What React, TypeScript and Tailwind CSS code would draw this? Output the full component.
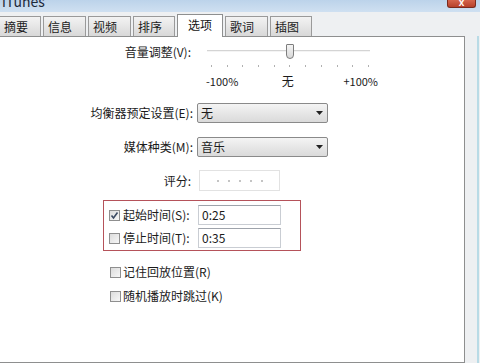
import React from "react";

const font = { fontFamily: '"Noto Sans CJK SC", "Liberation Sans", sans-serif' };

const tabs = ["摘要", "信息", "视频", "排序", "选项", "歌词", "插图"];
const tabWidths = [42, 43, 43, 42, 46, 43, 42];

function Checkbox({ checked }: { checked?: boolean }) {
  return (
    <span className="relative inline-block w-[11px] h-[11px] border border-[#8f8f8f] bg-gradient-to-br from-[#dcdcdc] to-[#f7f7f7] shrink-0">
      {checked && (
        <svg viewBox="0 0 11 11" className="absolute -left-px -top-px w-[11px] h-[11px]">
          <path d="M2.5 5.5 L4.5 8 L8.5 2.5" fill="none" stroke="#3b4a63" strokeWidth="1.6" />
        </svg>
      )}
    </span>
  );
}

function Select({ value }: { value: string }) {
  return (
    <div className="w-[131px] h-[20px] border border-[#8a8a8a] rounded-[2px] bg-gradient-to-b from-[#f4f4f4] to-[#dadada] flex items-center pl-[3px] pr-[4px]">
      <span className="flex-1 text-[12px] leading-[14px] text-[#1b1b1b]">{value}</span>
      <svg viewBox="0 0 7 4" className="w-[7px] h-[4px]">
        <path d="M0 0 H7 L3.5 4 Z" fill="#222" />
      </svg>
    </div>
  );
}

function TimeInput({ value }: { value: string }) {
  return (
    <div className="w-[83px] h-[20px] border border-[#c9cdd3] border-t-[#9ea3ab] bg-white flex items-center pl-[3px] text-[12px] leading-[14px] text-[#1b1b1b]">
      {value}
    </div>
  );
}

export default function App() {
  return (
    <div style={font} className="w-[480px] h-[363px] overflow-hidden bg-[#eef0f2] flex flex-col relative">
      {/* title bar */}
      <div className="h-[12px] bg-gradient-to-b from-[#bcd3ea] to-[#cfe0f1] relative shrink-0">
        <span className="absolute left-[2px] top-[-7px] text-[14px] leading-[16px] text-[#1d2a3a]">iTunes</span>
        <div className="absolute left-[447px] top-0 w-[29px] h-[8px] rounded-b-[3px] bg-gradient-to-b from-[#d5644c] to-[#b7402a] border border-t-0 border-[#7a2a1d] flex items-end justify-center">
          <span className="text-white text-[10px] leading-[8px] font-bold" style={{ fontFamily: '"Liberation Sans", sans-serif' }}>x</span>
        </div>
      </div>

      {/* tabs */}
      <div className="flex items-end pt-[1px] h-[24px] shrink-0 relative z-10">
        {tabs.map((t, i) =>
          t === "选项" ? (
            <div
              key={t}
              className="h-[23px] -mb-px bg-white border border-b-0 border-[#8e8f8f] flex items-start pt-[3px] justify-center text-[12px] leading-[14px] text-[#111]"
              style={{ width: tabWidths[i] }}
            >
              {t}
            </div>
          ) : (
            <div
              key={t}
              className="h-[20px] mr-[2px] bg-gradient-to-b from-[#f3f3f3] to-[#d8d8d8] border border-b-0 border-[#9a9a9a] flex items-center pl-[4px] text-[12px] leading-[14px] text-[#1b1b1b]"
              style={{ width: tabWidths[i], marginLeft: i === 0 ? -1 : i === 5 ? 2 : undefined }}
            >
              {t}
            </div>
          )
        )}
      </div>

      {/* panel */}
      <div className="flex-1 flex">
        <div className="w-[466px] -ml-px bg-white border border-[#8e8f8f] pt-[6px] text-[12px] leading-[14px] text-[#1b1b1b]">
          {/* volume */}
          <div className="flex items-center h-[18px]">
            <div className="w-[191px] text-right">音量调整(V):</div>
            <div className="ml-[16px] w-[163px] h-[18px] relative">
              <div className="absolute left-0 right-0 top-[7px] h-[2px] bg-[#d4d4d4] border-b border-[#f4f4f4]" />
              <div className="absolute left-[79px] top-[1px] w-[8px] h-[15px] rounded-b-[4px] rounded-t-[1px] border border-[#7d7d7d] bg-gradient-to-b from-[#f4f4f4] to-[#d9d9d9]" />
            </div>
          </div>
          <div className="ml-[211px] w-[158px] flex justify-between mt-[4px] h-[2px]">
            {Array.from({ length: 11 }).map((_, i) => (
              <span key={i} className="w-px h-[2px] bg-[#b0b0b0]" />
            ))}
          </div>
          <div className="ml-[206px] w-[172px] flex justify-between mt-[7px] text-[11px] leading-[14px]">
            <span>-100%</span>
            <span className="text-[12px] mr-[6px]">无</span>
            <span>+100%</span>
          </div>

          {/* eq */}
          <div className="flex items-center mt-[15px]">
            <div className="w-[193px] text-right">均衡器预定设置(E):</div>
            <div className="ml-[4px]">
              <Select value="无" />
            </div>
          </div>

          {/* media kind */}
          <div className="flex items-center mt-[14px]">
            <div className="w-[193px] text-right">媒体种类(M):</div>
            <div className="ml-[4px]">
              <Select value="音乐" />
            </div>
          </div>

          {/* rating */}
          <div className="flex items-center mt-[13px]">
            <div className="w-[191px] text-right">评分:</div>
            <div className="ml-[8px] w-[81px] h-[21px] border border-[#e2e2e2] flex items-center justify-center gap-[9px]">
              {Array.from({ length: 5 }).map((_, i) => (
                <span key={i} className="w-[2px] h-[2px] bg-[#c4c4c4]" />
              ))}
            </div>
          </div>

          {/* start / stop */}
          <div className="ml-[103px] mt-[9px] w-[198px] h-[51px] border border-[#b5525a] pl-[5px] pt-[4px] flex flex-col gap-[3px]">
            <div className="flex items-center h-[20px]">
              <Checkbox checked />
              <span className="ml-[3px] w-[75px]">起始时间(S):</span>
              <TimeInput value="0:25" />
            </div>
            <div className="flex items-center h-[20px]">
              <Checkbox />
              <span className="ml-[3px] w-[75px]">停止时间(T):</span>
              <TimeInput value="0:35" />
            </div>
          </div>

          {/* remember / skip */}
          <div className="ml-[110px] mt-[14px] flex flex-col gap-[10px]">
            <div className="flex items-center h-[14px]">
              <Checkbox />
              <span className="ml-[2px]">记住回放位置(R)</span>
            </div>
            <div className="flex items-center h-[14px]">
              <Checkbox />
              <span className="ml-[2px]">随机播放时跳过(K)</span>
            </div>
          </div>
        </div>
        <div className="flex-1" />
        <div className="w-[2px] mr-[1px] bg-[#b9dbe6]" />
      </div>
    </div>
  );
}
